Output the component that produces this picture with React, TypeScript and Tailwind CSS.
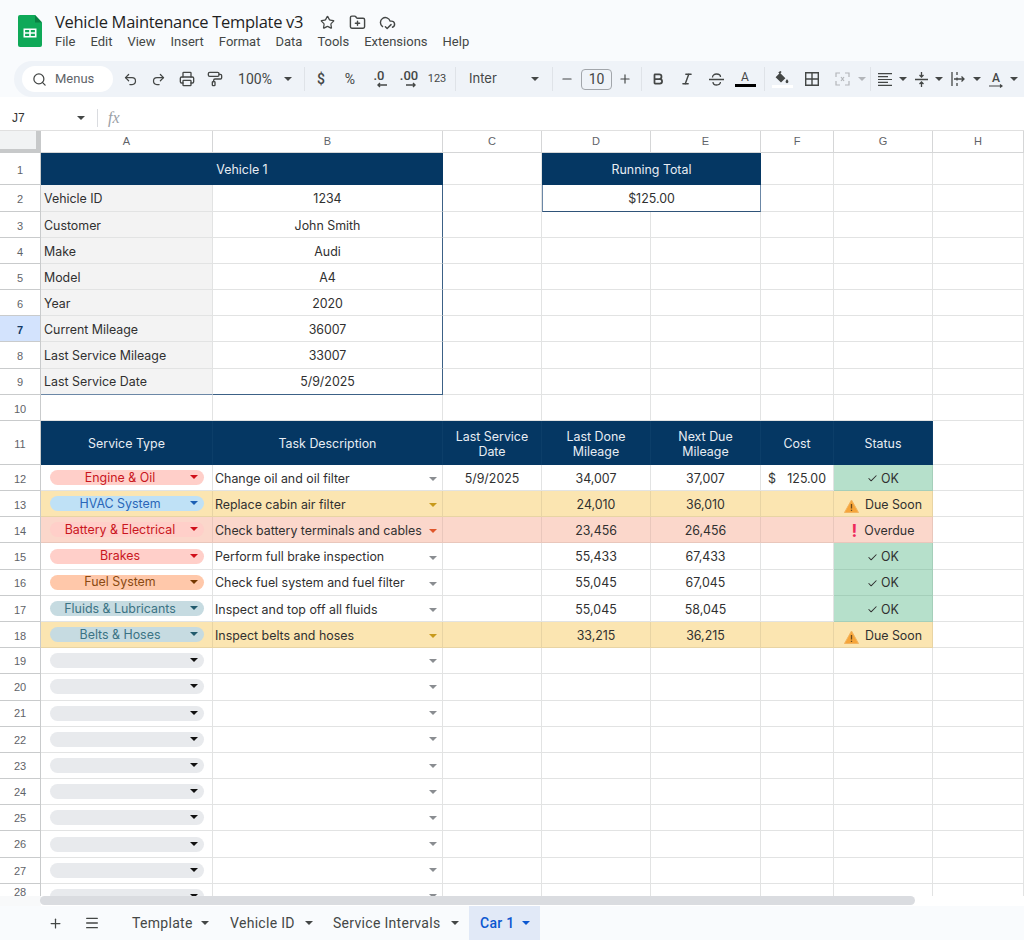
import React from 'react';
import {
  Search, Undo2, Redo2, Printer, PaintRoller, Star, FolderPlus, CloudCheck, Italic, Bold,
  Plus, Minus, Menu, Check,
} from 'lucide-react';

const gridCols = 'grid grid-cols-[41px_172px_230px_99px_109px_110px_73px_99px_91px]';
const line = 'border-r border-b border-[#e2e3e3]';
const navy = 'bg-[#053763] text-[#e8edf3] border-[#053763]';

type Tone = 'none' | 'yellow' | 'red' | 'green';

const toneClass: Record<Tone, string> = {
  none: 'border-[#e2e3e3]',
  yellow: 'bg-[#fbe5b1] border-[#e8d4a4]',
  red: 'bg-[#fbd7cb] border-[#e9c7bc]',
  green: 'bg-[#b6e0cb] border-[#a5cfba]',
};

const chipClass: Record<string, { pill: string; caret: string }> = {
  red: { pill: 'bg-[#ffcfc9] text-[#c9171e]', caret: 'border-t-[#d0101a]' },
  blue: { pill: 'bg-[#bfe1f6] text-[#2a66b8]', caret: 'border-t-[#1a5fb4]' },
  orange: { pill: 'bg-[#ffc8aa] text-[#8a4a12]', caret: 'border-t-[#753800]' },
  teal: { pill: 'bg-[#c6dbe1] text-[#3b7384]', caret: 'border-t-[#215a6c]' },
  empty: { pill: 'bg-[#e8eaed] text-[#222]', caret: 'border-t-[#111]' },
};

const Caret = ({ className = 'border-t-[#444746]' }: { className?: string }) => (
  <span className={`inline-block w-0 h-0 shrink-0 border-x-[4px] border-t-[4px] border-x-transparent ${className}`} />
);

const Sep = ({ className }: { className: string }) => (
  <span className={`w-px h-[24px] bg-[#dfe3e8] shrink-0 ${className}`} />
);

const Slot = ({ className, children }: { className: string; children?: React.ReactNode }) => (
  <span className={`flex items-center justify-center shrink-0 h-full text-[#444746] ${className}`}>{children}</span>
);

// row 28 is cut off by the scrollbar, its number sits in the visible part
const RowNum = ({ n }: { n: number }) => (
  <div className={`flex items-center justify-center border-r border-b border-[#c9cbcc] text-[11px] text-[#5f6368] font-['Liberation_Sans',sans-serif] ${n === 7 ? 'bg-[#d3e3fd] font-bold text-[#123a66]' : ''} ${n === 28 ? 'pb-[8px]' : n > 18 ? 'pt-[1px]' : 'pt-[3px]'}`}>
    {n}
  </div>
);

const Chip = ({ label, kind }: { label: string; kind: string }) => (
  <div className={`relative flex items-center justify-center ml-[9px] h-[15px] w-[154px] rounded-full pt-[1px] pr-[14px] ${chipClass[kind].pill}`}>
    {label}
    <span className="absolute right-[6px] top-[5px] flex">
      <Caret className={chipClass[kind].caret} />
    </span>
  </div>
);

const WarnIcon = () => (
  <svg width="15" height="14" viewBox="0 0 15 14" className="shrink-0 mt-[2px]">
    <path d="M7.5 1 14.5 13.5H.5Z" fill="#f6a53a" stroke="#f2b45f" strokeLinejoin="round" />
    <path d="M7.5 5v4.5M7.5 10.8v1.2" stroke="#6b4a1d" strokeWidth="1.3" />
  </svg>
);

const Status = ({ value }: { value: string }) => {
  if (value === 'OK') {
    return (
      <span className="flex items-center gap-[3px]">
        <Check size={11} strokeWidth={2.2} />
        OK
      </span>
    );
  }
  if (value === 'Due Soon') {
    return (
      <span className="flex items-center gap-[6px]">
        <WarnIcon />
        Due Soon
      </span>
    );
  }
  return (
    <span className="flex items-center gap-[7px]">
      <span className="text-[17px] font-bold text-[#ee2a5b] leading-none">!</span>
      Overdue
    </span>
  );
};

const info: [string, string][] = [
  ['Vehicle ID', '1234'],
  ['Customer', 'John Smith'],
  ['Make', 'Audi'],
  ['Model', 'A4'],
  ['Year', '2020'],
  ['Current Mileage', '36007'],
  ['Last Service Mileage', '33007'],
  ['Last Service Date', '5/9/2025'],
];

const services = [
  { n: 12, type: 'Engine & Oil', kind: 'red', task: 'Change oil and oil filter', date: '5/9/2025', last: '34,007', next: '37,007', cost: true, status: 'OK', tone: 'none' as Tone },
  { n: 13, type: 'HVAC System', kind: 'blue', task: 'Replace cabin air filter', date: '', last: '24,010', next: '36,010', cost: false, status: 'Due Soon', tone: 'yellow' as Tone },
  { n: 14, type: 'Battery & Electrical', kind: 'red', task: 'Check battery terminals and cables', date: '', last: '23,456', next: '26,456', cost: false, status: 'Overdue', tone: 'red' as Tone },
  { n: 15, type: 'Brakes', kind: 'red', task: 'Perform full brake inspection', date: '', last: '55,433', next: '67,433', cost: false, status: 'OK', tone: 'none' as Tone },
  { n: 16, type: 'Fuel System', kind: 'orange', task: 'Check fuel system and fuel filter', date: '', last: '55,045', next: '67,045', cost: false, status: 'OK', tone: 'none' as Tone },
  { n: 17, type: 'Fluids & Lubricants', kind: 'teal', task: 'Inspect and top off all fluids', date: '', last: '55,045', next: '58,045', cost: false, status: 'OK', tone: 'none' as Tone },
  { n: 18, type: 'Belts & Hoses', kind: 'teal', task: 'Inspect belts and hoses', date: '', last: '33,215', next: '36,215', cost: false, status: 'Due Soon', tone: 'yellow' as Tone },
];

const taskCaret: Record<Tone, string> = {
  none: 'border-t-[#8a8d91]',
  yellow: 'border-t-[#c79a1c]',
  red: 'border-t-[#e0562a]',
  green: 'border-t-[#8a8d91]',
};

const Blanks = ({ from, to }: { from: number; to: number }) => (
  <>
    {Array.from({ length: to - from + 1 }).map((_, i) => (
      <div key={i} className={line} />
    ))}
  </>
);

const Toolbar = () => (
  <div className="flex items-center h-[36px] ml-[14px] pl-[8px] bg-[#eff3f8] rounded-l-full overflow-hidden text-[13px] font-['Roboto',sans-serif]">
    <div className="flex items-center w-[91px] h-[26px] shrink-0 bg-white rounded-full pl-[10px] text-[#5f6368]">
      <Search size={15} strokeWidth={2} className="text-[#444746]" />
      <span className="ml-[8px] text-[13px]">Menus</span>
    </div>
    <Slot className="w-[34px]"><Undo2 size={15} /></Slot>
    <Slot className="w-[22px]"><Redo2 size={15} /></Slot>
    <Slot className="w-[36px]"><Printer size={16} /></Slot>
    <Slot className="w-[20px]"><PaintRoller size={16} /></Slot>
    <Slot className="w-[60px] text-[14px]">100%</Slot>
    <Slot className="w-[6px]"><Caret /></Slot>
    <Sep className="ml-[13px]" />
    <Slot className="w-[32px] text-[14px] font-medium">$</Slot>
    <Slot className="w-[26px] text-[14px]">%</Slot>
    <Slot className="w-[32px] relative font-medium">
      <span className="mt-[-6px]">.0</span>
      <svg width="12" height="6" viewBox="0 0 12 6" className="absolute top-[21px] left-[13px]"><path d="M11 3H2M4 1 2 3l2 2" fill="none" stroke="#444746" strokeWidth="1.4" /></svg>
    </Slot>
    <Slot className="w-[28px] relative font-medium">
      <span className="mt-[-6px]">.00</span>
      <svg width="12" height="6" viewBox="0 0 12 6" className="absolute top-[21px] left-[10px]"><path d="M1 3h9M8 1l2 2-2 2" fill="none" stroke="#444746" strokeWidth="1.4" /></svg>
    </Slot>
    <Slot className="w-[28px] text-[11px]">123</Slot>
    <Sep className="ml-[4px]" />
    <Slot className="w-[62px] ml-[13px] !justify-start font-['Inter',sans-serif]">Inter</Slot>
    <Slot className="w-[8px]"><Caret /></Slot>
    <Sep className="ml-[13px]" />
    <Slot className="w-[28px]"><Minus size={14} /></Slot>
    <div className="flex items-center justify-center w-[31px] h-[21px] shrink-0 rounded-[4px] border border-[#a2a6ab] text-[14px] text-[#444746]">10</div>
    <Slot className="w-[26px]"><Plus size={14} /></Slot>
    <Sep className="ml-[3px]" />
    <Slot className="w-[32px]"><Bold size={14} strokeWidth={3} /></Slot>
    <Slot className="w-[26px]"><Italic size={14} strokeWidth={2.5} /></Slot>
    <Slot className="w-[32px]">
      <svg width="15" height="13" viewBox="0 0 15 13" fill="none" stroke="#444746" strokeWidth="1.3"><path d="M0 6.5h15M3.5 4.5C3.5 2.5 5.2 1 7.5 1s4 1.2 4 3M4 9c0 1.8 1.6 3 3.5 3s3.8-1 4-3" /></svg>
    </Slot>
    <Slot className="w-[26px] flex-col !justify-center">
      <span className="text-[12px] leading-[13px] font-['Roboto',sans-serif]">A</span>
      <span className="w-[21px] h-[3px] bg-black" />
    </Slot>
    <Sep className="ml-[6px]" />
    <Slot className="w-[34px] flex-col !justify-center">
      <svg width="14" height="13" viewBox="0 0 14 13" fill="#444746"><path d="M5.5 0 6.6 1.1 5.4 2.3 10.4 7.2 6 11.5 0.6 6.2 4.3 2.4 3.3 1.3Z" /><path d="M12 8c.9 1.3 1.4 2.1 1.4 2.8a1.4 1.4 0 0 1-2.8 0c0-.7.5-1.5 1.4-2.8Z" /></svg>
      <span className="w-[21px] h-[3px] mt-[1px] bg-white" />
    </Slot>
    <Slot className="w-[26px]">
      <svg width="14" height="14" viewBox="0 0 14 14" fill="none" stroke="#444746" strokeWidth="1.4"><path d="M.7.7h12.6v12.6H.7ZM7 .7v12.6M.7 7h12.6" /></svg>
    </Slot>
    <Slot className="w-[34px]">
      <svg width="15" height="14" viewBox="0 0 15 14" fill="none" stroke="#b3b6ba" strokeWidth="1.2"><path d="M1 5V1h4M14 5V1h-4M1 9v4h4M14 9v4h-4M6 5l1.5 2L6 9M9 5 7.5 7 9 9" /></svg>
    </Slot>
    <Slot className="w-[6px]"><Caret className="border-t-[#b3b6ba]" /></Slot>
    <Sep className="ml-[5px]" />
    <Slot className="w-[28px]">
      <svg width="14" height="13" viewBox="0 0 14 13" fill="none" stroke="#444746" strokeWidth="1.2"><path d="M0 .7h14M0 3.6h10M0 6.5h14M0 9.4h10M0 12.3h14" /></svg>
    </Slot>
    <Slot className="w-[8px]"><Caret /></Slot>
    <Slot className="w-[28px]">
      <svg width="13" height="15" viewBox="0 0 13 15" fill="none" stroke="#444746" strokeWidth="1.3"><path d="M0 7.5h13M6.5 0v5M4.5 3l2 2 2-2M6.5 15v-5M4.5 12l2-2 2 2" /></svg>
    </Slot>
    <Slot className="w-[8px]"><Caret /></Slot>
    <Slot className="w-[30px]">
      <svg width="15" height="14" viewBox="0 0 15 14" fill="none" stroke="#444746" strokeWidth="1.3"><path d="M1 0v14M6 0v3M6 5.5v3M6 11v3M3 7h10M10.5 4.5 13 7l-2.5 2.5" /></svg>
    </Slot>
    <Slot className="w-[8px]"><Caret /></Slot>
    <Slot className="w-[30px] relative">
      <span className="text-[12px] mt-[-3px] font-medium">A</span>
      <svg width="15" height="5" viewBox="0 0 15 5" className="absolute top-[23px] left-[8px]"><path d="M0 2h13M11 .5 13 2l-2 1.5" fill="none" stroke="#444746" strokeWidth="1.2" /></svg>
    </Slot>
    <Slot className="w-[6px]"><Caret /></Slot>
  </div>
);

export default function App() {
  return (
    <div className="flex flex-col h-[940px] w-[1024px] overflow-hidden bg-white font-['Inter',sans-serif] text-[12.4px] text-[#303030]">
      <div className="bg-[#f9fbfd] h-[97px] shrink-0">
        <div className="flex items-start pl-[18px] pt-[15px] h-[61px]">
          <svg width="24" height="32" viewBox="0 0 24 32" className="shrink-0">
            <path d="M2 0h15l7 7.5V30a2 2 0 0 1-2 2H2a2 2 0 0 1-2-2V2a2 2 0 0 1 2-2Z" fill="#0fa958" />
            <path d="M17 0v7.5h7Z" fill="#0a8043" />
            <path d="M5.5 13.5h13v9h-13Zm1.6 1.6v2.1h4.1v-2.1Zm5.7 0v2.1h4.1v-2.1Zm-5.7 3.7v2.1h4.1v-2.1Zm5.7 0v2.1h4.1v-2.1Z" fill="#fff" fillRule="evenodd" />
          </svg>
          <div className="ml-[13px] mt-[-5px]">
            <div className="flex items-center h-[24px]">
              <span className="text-[16.5px] text-[#1f1f1f] font-['Open_Sans',sans-serif] tracking-[-0.3px] whitespace-nowrap w-[265px]">Vehicle Maintenance Template v3</span>
              <Star size={15} className="text-[#444746]" />
              <FolderPlus size={17} className="ml-[14px] text-[#444746]" />
              <CloudCheck size={17} className="ml-[13px] text-[#444746]" />
            </div>
            <div className="flex gap-[15px] h-[18px] items-center mt-[-1px] text-[13px] text-[#444746] font-['Roboto',sans-serif]">
              <span>File</span>
              <span>Edit</span>
              <span>View</span>
              <span>Insert</span>
              <span>Format</span>
              <span>Data</span>
              <span>Tools</span>
              <span>Extensions</span>
              <span>Help</span>
            </div>
          </div>
        </div>
        <Toolbar />
      </div>

      <div className="flex items-center h-[34px] shrink-0 pt-[8px] border-b border-[#e0e0e0] text-[12px] text-[#333] font-['Liberation_Sans',sans-serif]">
        <span className="w-[77px] pl-[12px]">J7</span>
        <Caret />
        <span className="ml-[12px] w-px h-[18px] bg-[#dadce0]" />
        <span className="ml-[10px] italic text-[16px] text-[#9aa0a6] font-['Liberation_Serif',serif]">fx</span>
      </div>

      <div className="relative flex-1 min-h-0 overflow-hidden">
        <div className={`${gridCols} h-[22px] text-[11px] text-[#5f6368] font-['Liberation_Sans',sans-serif]`}>
          <div className="bg-[#f1f3f4] border-r-[5px] border-b-[4px] border-[#c7c9ca]" />
          {['A', 'B', 'C', 'D', 'E', 'F', 'G', 'H'].map((c) => (
            <div key={c} className="flex items-center justify-center border-r border-b border-[#d5d6d7]">{c}</div>
          ))}
        </div>

        <div className={`${gridCols} h-[32px]`}>
          <RowNum n={1} />
          <div className={`col-span-2 flex items-center justify-center pt-[3px] ${navy}`}>Vehicle 1</div>
          <div className={line} />
          <div className={`col-span-2 flex items-center justify-center pt-[3px] ${navy}`}>Running Total</div>
          <Blanks from={1} to={3} />
        </div>

        {info.map(([label, value], i) => (
          <div key={label} className={`${gridCols} ${i === 0 ? 'h-[27px]' : 'h-[26.1px]'}`}>
            <RowNum n={i + 2} />
            <div className={`flex items-center pt-[3px] pl-[3px] bg-[#f3f3f3] ${line} ${i === 7 ? '!border-b-[#6b87a6]' : ''}`}>{label}</div>
            <div className={`flex items-center justify-center pt-[3px] border-b border-r border-[#e2e3e3] !border-r-[#3c6186] ${i === 7 ? '!border-b-[#3c6186]' : ''}`}>{value}</div>
            <div className={line} />
            {i === 0 ? (
              <div className="col-span-2 flex items-center justify-center pt-[3px] border-x border-b border-x-[#6b87a6] border-b-[#2f5379]">$125.00</div>
            ) : (
              <Blanks from={1} to={2} />
            )}
            <Blanks from={1} to={3} />
          </div>
        ))}

        <div className={`${gridCols} h-[26.2px]`}>
          <RowNum n={10} />
          <Blanks from={1} to={8} />
        </div>

        <div className={`${gridCols} h-[44px]`}>
          <RowNum n={11} />
          {['Service Type', 'Task Description', 'Last Service Date', 'Last Done Mileage', 'Next Due Mileage', 'Cost', 'Status'].map((h) => (
            <div key={h} className={`flex items-center justify-center text-center leading-[15px] pt-[2px] px-[8px] ${navy} border-r border-r-[#0c3e69]`}>{h}</div>
          ))}
          <div className={line} />
        </div>

        {services.map((s) => {
          const t = toneClass[s.tone];
          return (
            <div key={s.n} className={`${gridCols} h-[26.2px]`}>
              <RowNum n={s.n} />
              <div className={`flex items-center border-r border-b ${t}`}>
                <Chip label={s.type} kind={s.kind} />
              </div>
              <div className={`flex items-center justify-between pt-[3px] pl-[2px] pr-[5px] border-r border-b whitespace-nowrap ${t}`}>
                {s.task}
                <Caret className={taskCaret[s.tone]} />
              </div>
              <div className={`flex items-center justify-center pt-[3px] border-r border-b ${t}`}>{s.date}</div>
              <div className={`flex items-center justify-center pt-[3px] border-r border-b ${t}`}>{s.last}</div>
              <div className={`flex items-center justify-center pt-[3px] border-r border-b ${t}`}>{s.next}</div>
              <div className={`flex items-center justify-between pt-[3px] pl-[7px] pr-[7px] border-r border-b ${t}`}>
                {s.cost && (
                  <>
                    <span>$</span>
                    <span>125.00</span>
                  </>
                )}
              </div>
              <div className={`flex items-center justify-center pt-[3px] border-r border-b ${toneClass[s.status === 'OK' ? 'green' : s.tone]}`}>
                <Status value={s.status} />
              </div>
              <div className={line} />
            </div>
          );
        })}

        {Array.from({ length: 10 }).map((_, i) => (
          <div key={i} className={`${gridCols} h-[26.2px]`}>
            <RowNum n={i + 19} />
            <div className={`flex items-center ${line}`}>
              <Chip label="" kind="empty" />
            </div>
            <div className={`flex items-center justify-end pr-[5px] ${line}`}>
              <Caret className="border-t-[#8a8d91]" />
            </div>
            <Blanks from={1} to={6} />
          </div>
        ))}

        <div className="absolute left-0 right-0 bottom-0 h-[10px] bg-white">
          <div className="w-[41px] h-full bg-[#f8f9fa] absolute left-0 top-0" />
          <div className="absolute left-[40px] top-0 w-[875px] h-[9px] rounded-full bg-[#dadce0]" />
        </div>
      </div>

      <div className="flex items-stretch h-[34px] shrink-0 bg-[#f9fbfd] text-[14px] text-[#444746] font-['Roboto',sans-serif] tracking-[0.3px]">
        <div className="flex items-center w-[132px] pl-[48px]">
          <Plus size={15} />
          <Menu size={16} className="ml-[21px]" />
        </div>
        <div className="flex items-center w-[98px]">Template<span className="ml-[8px] flex"><Caret /></span></div>
        <div className="flex items-center w-[103px]">Vehicle ID<span className="ml-[10px] flex"><Caret /></span></div>
        <div className="flex items-center w-[136px]">Service Intervals<span className="ml-[11px] flex"><Caret /></span></div>
        <div className="flex items-center w-[71px] pl-[11px] bg-[#e1e9f7] text-[#0b57d0] font-medium">
          Car 1
          <span className="ml-[7px] flex"><Caret className="border-t-[#0b57d0]" /></span>
        </div>
      </div>
    </div>
  );
}
